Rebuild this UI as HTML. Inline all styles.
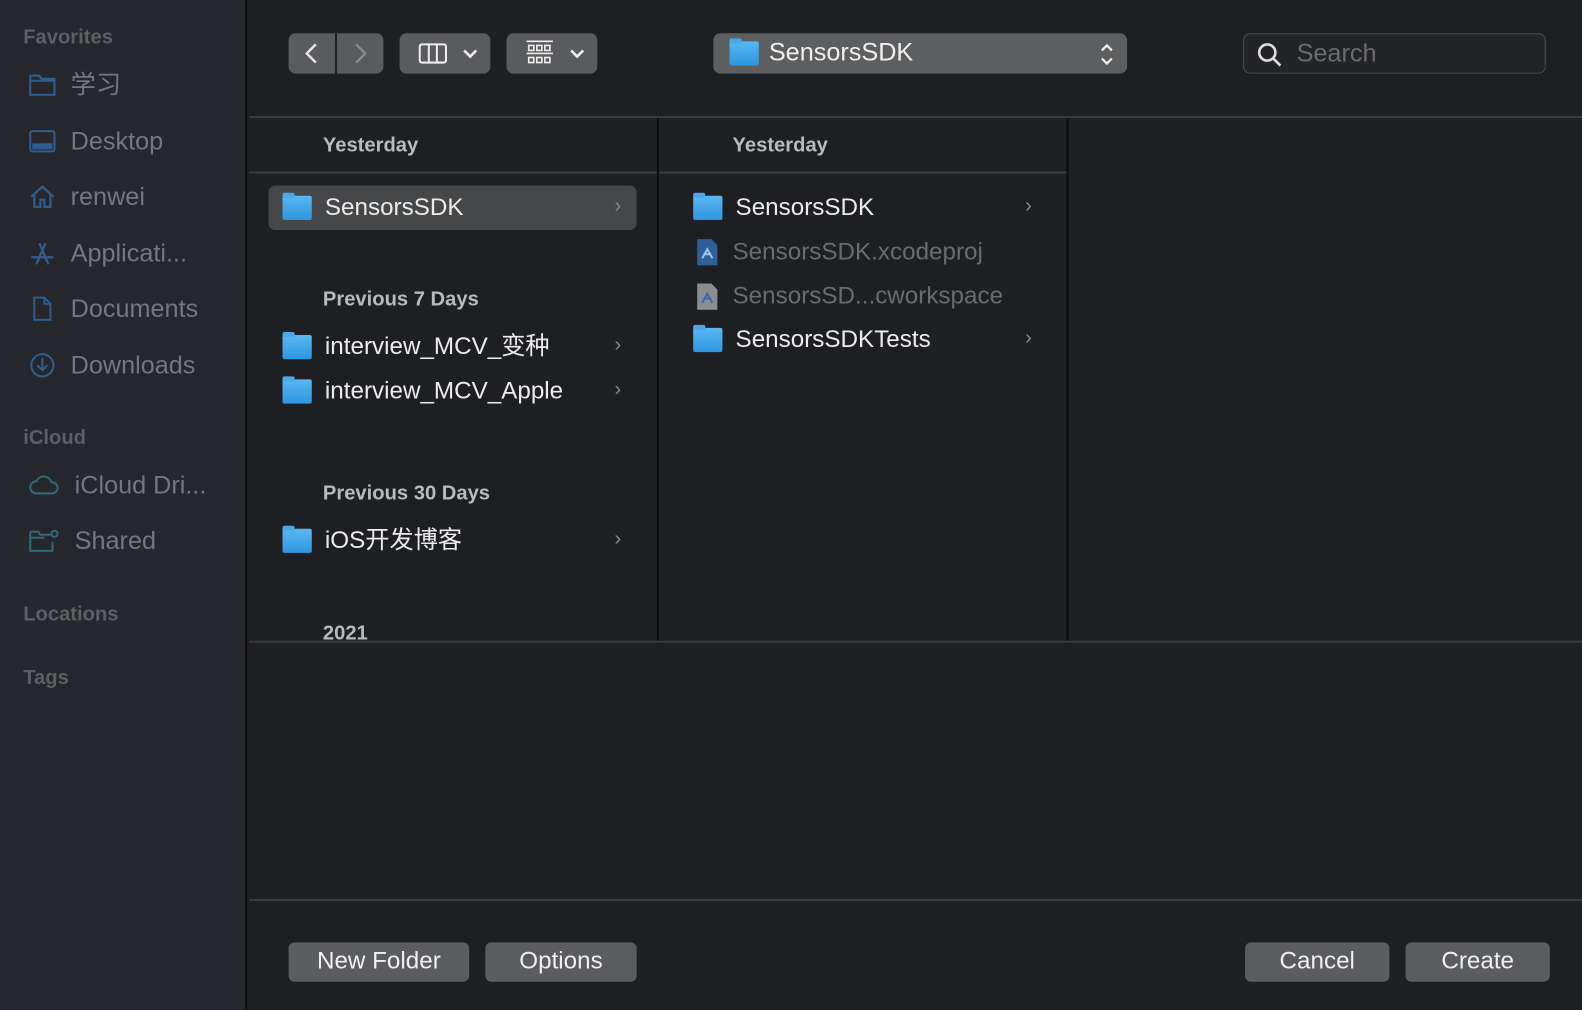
<!DOCTYPE html><html><head><meta charset="utf-8"><style>
*{margin:0;padding:0;box-sizing:border-box}
html,body{width:1582px;height:1010px;overflow:hidden;background:#1e1f22}
#wrap{width:1582px;height:1010px;position:relative;transform:scale(1.009);transform-origin:0 0;font-family:"Liberation Sans","Noto Sans CJK SC",sans-serif;color:#e6e6e6}
.a{position:absolute}
#side{left:0;top:0;width:245px;height:1010px;background:#26272c;border-right:2px solid #0f0f10}
.sh{position:absolute;left:23px;font-size:20px;font-weight:bold;color:#5d5f63}
.si{position:absolute;left:28px;font-size:25px;color:#75777c;display:flex;align-items:center;line-height:30px}
.si svg{margin-right:14px}
.btn{position:absolute;background:#5a5b5e;border-radius:7px}
.hdr{position:absolute;font-size:20px;font-weight:bold;color:#b9babc}
.it{position:absolute;font-size:24px;color:#ececec;display:flex;align-items:center;line-height:28px;height:28px}
.fold{width:29px;height:24px;background:linear-gradient(#5ab8f2,#2e95e0);border-radius:2px;position:relative;margin-right:13px;flex:none}
.fold:before{content:"";position:absolute;left:0;top:-3px;width:12px;height:5px;background:#4aa9ea;border-radius:2px 2px 0 0}
.chev{position:absolute;font-size:20px;color:#8a8b8d}
.bb{position:absolute;top:934px;height:39px;background:#5b5c5f;border-radius:6px;font-size:24px;color:#f0f0f0;text-align:center;line-height:38px}
</style></head><body><div id="wrap">
<div id="side" class="a">
<div class="sh" style="top:26px">Favorites</div>
<div class="si" style="top:69px"><svg width="28" height="26" viewBox="0 0 28 26" fill="none" stroke="#2f5d90" stroke-width="2"><path d="M2 4h9l2 3h13v16H2z M2 9h24"/></svg>学习</div>
<div class="si" style="top:125px"><svg width="28" height="26" viewBox="0 0 28 26" fill="none" stroke="#2f5d90" stroke-width="2"><rect x="2" y="3" width="24" height="20" rx="2"/><rect x="5" y="16" width="18" height="4" fill="#2f5d90"/></svg>Desktop</div>
<div class="si" style="top:180px"><svg width="28" height="26" viewBox="0 0 28 26" fill="none" stroke="#2f5d90" stroke-width="2.2"><path d="M3 13L14 3l11 10M6 11v12h6v-7h4v7h6V11"/></svg>renwei</div>
<div class="si" style="top:236px"><svg width="28" height="26" viewBox="0 0 28 26" fill="none" stroke="#2f5d90" stroke-width="2.2"><path d="M8 24L17 3M20 24L11 3M3 17h22"/></svg>Applicati...</div>
<div class="si" style="top:291px"><svg width="28" height="26" viewBox="0 0 28 26" fill="none" stroke="#2f5d90" stroke-width="2"><path d="M6 2h10l6 6v16H6z M16 2v6h6"/></svg>Documents</div>
<div class="si" style="top:347px"><svg width="28" height="26" viewBox="0 0 28 26" fill="none" stroke="#2f5d90" stroke-width="2"><circle cx="14" cy="13" r="11"/><path d="M14 6v12M9 13l5 5 5-5"/></svg>Downloads</div>
<div class="sh" style="top:423px">iCloud</div>
<div class="si" style="top:466px"><svg width="32" height="26" viewBox="0 0 32 26" fill="none" stroke="#2f6a77" stroke-width="2"><path d="M8 21a6 6 0 0 1 0-12a8 8 0 0 1 15 1a5.5 5.5 0 0 1 1 11z"/></svg>iCloud Dri...</div>
<div class="si" style="top:521px"><svg width="32" height="26" viewBox="0 0 32 26" fill="none" stroke="#2f6a77" stroke-width="2"><path d="M2 4h8l2 3h10M2 4v19h22v-9M2 10h14"/><circle cx="26" cy="6" r="3"/></svg>Shared</div>
<div class="sh" style="top:598px">Locations</div>
<div class="sh" style="top:661px">Tags</div>
</div>
<div class="btn" style="left:286px;top:33px;width:46px;height:40px;border-radius:7px 0 0 7px"><svg class="a" style="left:14px;top:9px" width="16" height="22" viewBox="0 0 16 22" fill="none" stroke="#e8e8e8" stroke-width="2.4"><path d="M13 2L4 11l9 9"/></svg></div>
<div class="btn" style="left:334px;top:33px;width:46px;height:40px;border-radius:0 7px 7px 0"><svg class="a" style="left:16px;top:9px" width="16" height="22" viewBox="0 0 16 22" fill="none" stroke="#8d8e90" stroke-width="2.2"><path d="M3 2l9 9-9 9"/></svg></div>
<div class="btn" style="left:396px;top:33px;width:90px;height:40px"><svg class="a" style="left:18px;top:9px" width="30" height="22" viewBox="0 0 30 22" fill="none" stroke="#eee" stroke-width="2"><rect x="2" y="2" width="26" height="18" rx="2"/><path d="M11 2v18M19 2v18"/></svg><svg class="a" style="left:62px;top:14px" width="16" height="12" viewBox="0 0 16 12" fill="none" stroke="#eee" stroke-width="2.6"><path d="M2 3l6 6 6-6"/></svg></div>
<div class="btn" style="left:502px;top:33px;width:90px;height:40px"><svg class="a" style="left:18px;top:6px" width="30" height="28" viewBox="0 0 30 28" fill="none" stroke="#eee" stroke-width="1.6"><path d="M2 2h26M2 14h26"/><rect x="4" y="6" width="5" height="5"/><rect x="12" y="6" width="5" height="5"/><rect x="20" y="6" width="5" height="5"/><rect x="4" y="18" width="5" height="5"/><rect x="12" y="18" width="5" height="5"/><rect x="20" y="18" width="5" height="5"/></svg><svg class="a" style="left:62px;top:14px" width="16" height="12" viewBox="0 0 16 12" fill="none" stroke="#eee" stroke-width="2.6"><path d="M2 3l6 6 6-6"/></svg></div>
<div class="btn" style="left:707px;top:33px;width:410px;height:40px;background:#5d5e60"><div class="a" style="left:16px;top:8px"><div class="fold"></div></div><div class="a" style="left:55px;top:5px;font-size:25px;color:#f0f0f0">SensorsSDK</div><svg class="a" style="left:382px;top:8px" width="16" height="26" viewBox="0 0 16 26" fill="none" stroke="#eee" stroke-width="2.2"><path d="M3 9l5-5 5 5M3 17l5 5 5-5"/></svg></div>
<div class="a" style="left:1232px;top:33px;width:300px;height:40px;border:1.5px solid #4a4b4e;border-radius:7px;background:#232427"><svg class="a" style="left:12px;top:7px" width="28" height="26" viewBox="0 0 28 26" fill="none" stroke="#ddd" stroke-width="2.6"><circle cx="11" cy="11" r="8"/><path d="M17 17l7 7"/></svg><div class="a" style="left:52px;top:5px;font-size:25px;color:#6b6c6f">Search</div></div>
<div class="a" style="left:247px;top:115px;width:1335px;height:2px;background:#3a3b3e"></div>
<div class="a" style="left:651px;top:117px;width:2px;height:519px;background:#0c0c0d"></div>
<div class="a" style="left:1057px;top:117px;width:2px;height:519px;background:#0c0c0d"></div>
<div class="a" style="left:247px;top:170px;width:404px;height:2px;background:#3a3b3e"></div>
<div class="a" style="left:653px;top:170px;width:404px;height:2px;background:#3a3b3e"></div>
<div class="a" style="left:247px;top:635px;width:1335px;height:2px;background:#3a3b3e"></div>
<div class="hdr" style="left:320px;top:133px">Yesterday</div>
<div class="hdr" style="left:726px;top:133px">Yesterday</div>
<div class="a" style="left:266px;top:184px;width:365px;height:44px;background:#464749;border-radius:7px"></div>
<div class="it" style="left:280px;top:192px"><div class="fold"></div>SensorsSDK</div><div class="chev" style="left:609px;top:193px">›</div>
<div class="hdr" style="left:320px;top:286px">Previous 7 Days</div>
<div class="it" style="left:280px;top:330px"><div class="fold"></div>interview_MCV_变种</div><div class="chev" style="left:609px;top:331px">›</div>
<div class="it" style="left:280px;top:374px"><div class="fold"></div>interview_MCV_Apple</div><div class="chev" style="left:609px;top:375px">›</div>
<div class="hdr" style="left:320px;top:478px">Previous 30 Days</div>
<div class="it" style="left:280px;top:522px"><div class="fold"></div>iOS开发博客</div><div class="chev" style="left:609px;top:523px">›</div>
<div class="hdr" style="left:320px;top:617px;height:18px;overflow:hidden">2021</div>
<div class="it" style="left:687px;top:192px"><div class="fold"></div>SensorsSDK</div><div class="chev" style="left:1016px;top:193px">›</div>
<div class="it" style="left:689px;top:236px;color:#6a6b6e"><svg width="24" height="28" viewBox="0 0 24 28" style="margin-right:13px;flex:none"><path d="M2 1h14l6 6v20H2z" fill="#2e5f99"/><path d="M7 20l5-9 5 9M8 16h8" stroke="#9cc3ee" stroke-width="2" fill="none"/></svg>SensorsSDK.xcodeproj</div>
<div class="it" style="left:689px;top:280px;color:#6a6b6e"><svg width="24" height="28" viewBox="0 0 24 28" style="margin-right:13px;flex:none"><path d="M2 1h14l6 6v20H2z" fill="#8b8d92"/><path d="M7 20l5-9 5 9M8 16h8" stroke="#3a6aa8" stroke-width="2" fill="none"/></svg>SensorsSD...cworkspace</div>
<div class="it" style="left:687px;top:323px"><div class="fold"></div>SensorsSDKTests</div><div class="chev" style="left:1016px;top:324px">›</div>
<div class="a" style="left:247px;top:891px;width:1335px;height:2px;background:#3a3b3e"></div>
<div class="bb" style="left:286px;width:179px">New Folder</div>
<div class="bb" style="left:481px;width:150px">Options</div>
<div class="bb" style="left:1234px;width:143px">Cancel</div>
<div class="bb" style="left:1393px;width:143px">Create</div>
</div></body></html>
